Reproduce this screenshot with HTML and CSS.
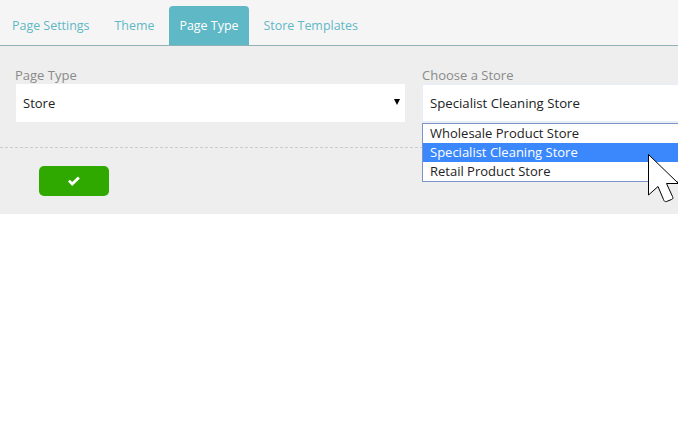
FILE: index.html
```html
<!DOCTYPE html>
<html lang="en">
<head>
    <meta charset="UTF-8">
    <meta name="viewport" content="width=device-width, initial-scale=1.0">
    <title>Page Type</title>
    <link rel="stylesheet" href="styles.css">
</head>
<body>
    <!-- Tabs -->
    <div class="tabs">
        <a class="tab">Page Settings</a>
        <a class="tab">Theme</a>
        <a class="tab active">Page Type</a>
        <a class="tab">Store Templates</a>
    </div>

    <div class="panel">
        <div class="fields">
            <div class="field field-type">
                <div class="field-label">Page Type</div>
                <div class="select">
                    <span>Store</span>
                    <span class="arrow"></span>
                </div>
            </div>
            <div class="field field-store">
                <div class="field-label">Choose a Store</div>
                <div class="select select-store">
                    <span>Specialist Cleaning Store</span>
                </div>
                <!-- Open dropdown -->
                <div class="dropdown">
                    <div class="option">Wholesale Product Store</div>
                    <div class="option selected">Specialist Cleaning Store</div>
                    <div class="option">Retail Product Store</div>
                </div>
            </div>
        </div>
        <div class="actions">
            <button class="save-btn">
                <svg width="14" height="11" viewBox="0 0 14 11"><path d="M1 5.6 L2.9 3.7 L5.2 6 L10.9 0.6 L12.9 2.5 L5.2 10 Z" fill="#fff"/></svg>
            </button>
        </div>
    </div>

    <!-- Mouse pointer -->
    <svg class="cursor" width="32" height="50" viewBox="0 0 32 50">
        <path d="M0.5 0.5 L0.5 41 L10 32.5 L15.5 45.5 C16 47 17 48 18.5 47.5 L23.5 45.5 C25 45 25.2 44 24.5 42.5 L18.5 29.5 L30.5 29.5 Z" fill="#fff" stroke="#000" stroke-width="1"/>
    </svg>
</body>
</html>
```

FILE: styles.css
```css
body {
    font-family: "Open Sans", Arial, sans-serif;
    margin: 0;
    padding: 0;
    background-color: #fff;
    position: relative;
    overflow: hidden;
    height: 422px;
}

.tabs {
    display: flex;
    align-items: flex-end;
    height: 45px;
    padding-left: 2px;
    gap: 5px;
    background-color: #f5f5f5;
    border-bottom: 1px solid #8fb0b5;
}

.tab {
    height: 39px;
    line-height: 39px;
    padding: 0 10px;
    font-size: 12.45px;
    color: #5fb8c5;
    border-radius: 4px 4px 0 0;
}

.tab.active {
    background-color: #5fb8c5;
    color: #fff;
}

.panel {
    height: 168px;
    background-color: #eee;
}

.fields {
    display: flex;
    height: 102px;
    box-sizing: border-box;
    padding-top: 20px;
    border-bottom: 1px dashed #ccc;
}

.field-type {
    width: 389px;
    margin-left: 16px;
}

.field-store {
    flex: 1;
    margin-left: 17px;
    position: relative;
}

.field-label {
    height: 18px;
    line-height: 18px;
    font-size: 13px;
    color: #8a8a8a;
    margin-left: -1px;
}

.field-store .field-label {
    margin-left: 0;
}

.select {
    display: flex;
    justify-content: space-between;
    align-items: center;
    height: 38px;
    padding: 0 5px 0 7px;
    background-color: #fff;
    font-size: 13px;
    color: #222;
}

.select-store {
    box-sizing: border-box;
    padding-left: 7px;
    font-size: 13.2px;
    border: 1px solid #e6eefc;
    border-right: none;
}

/* Native select arrow */
.arrow {
    width: 0;
    height: 0;
    margin-top: -2px;
    border-left: 3.5px solid transparent;
    border-right: 3.5px solid transparent;
    border-top: 6px solid #000;
}

.dropdown {
    position: absolute;
    top: 57px;
    left: 0;
    right: -2px;
    background-color: #fff;
    border: 1px solid #7a93c8;
    z-index: 2;
}

.option {
    height: 19px;
    line-height: 19px;
    padding-left: 7px;
    font-size: 13px;
    color: #222;
}

.option.selected {
    background-color: #3b88fd;
    color: #fff;
}

.actions {
    padding: 18px 0 0 39px;
}

.save-btn {
    display: flex;
    align-items: center;
    justify-content: center;
    width: 70px;
    height: 30px;
    padding: 0;
    border: none;
    border-radius: 5px;
    background-color: #2fa800;
}

.cursor {
    position: absolute;
    top: 154px;
    left: 648px;
    z-index: 3;
}
```
